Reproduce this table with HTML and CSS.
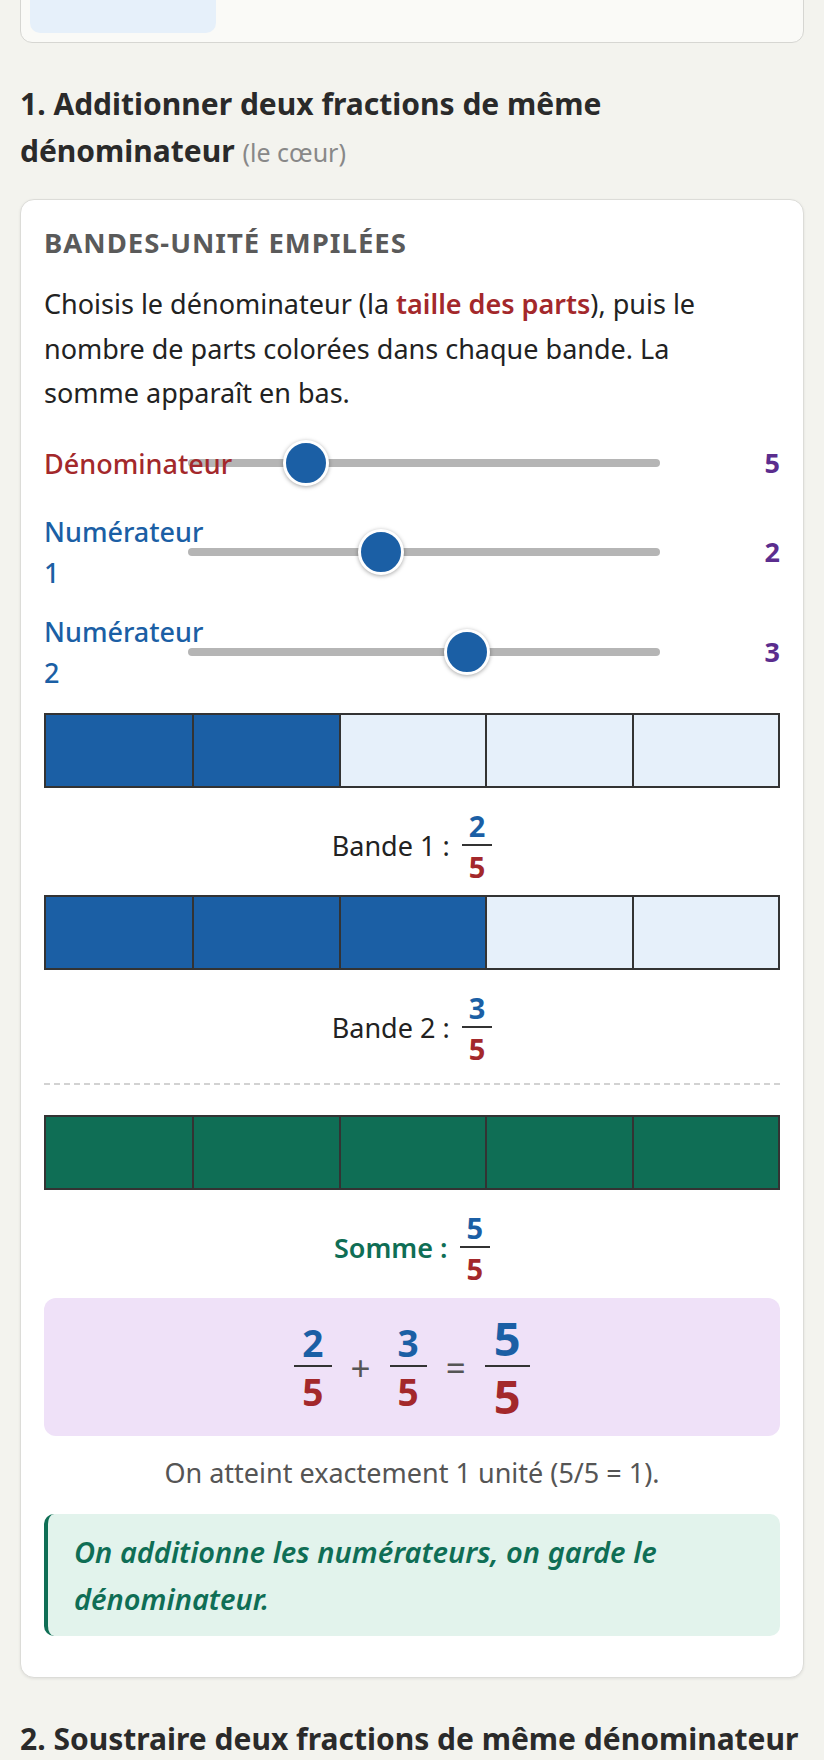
FILE: index.html
```html
<!DOCTYPE html>
<html lang="fr">
<head>
<meta charset="utf-8">
<title>Fractions de même dénominateur</title>
<link rel="stylesheet" href="styles.css">
</head>
<body>
<div class="page">
  <div class="prev-card"><div class="prev-chip"></div></div>

  <h2 class="sec-title">1. Additionner deux fractions de même dénominateur <span class="aside">(le cœur)</span></h2>

  <section class="card">
    <h3 class="card-title">Bandes-unité empilées</h3>
    <p class="intro">Choisis le dénominateur (la <strong class="hl">taille des parts</strong>), puis le nombre de parts colorées dans chaque bande. La somme apparaît en bas.</p>

    <div class="controls">
      <div class="ctrl">
        <label class="ctrl-label den-label" for="den">Dénominateur</label>
        <input class="slider" id="den" type="range" min="1" max="19" value="5">
        <span class="ctrl-val">5</span>
      </div>
      <div class="ctrl">
        <label class="ctrl-label num-label" for="n1">Numérateur 1</label>
        <input class="slider" id="n1" type="range" min="0" max="5" value="2">
        <span class="ctrl-val">2</span>
      </div>
      <div class="ctrl">
        <label class="ctrl-label num-label" for="n2">Numérateur 2</label>
        <input class="slider" id="n2" type="range" min="0" max="5" value="3">
        <span class="ctrl-val">3</span>
      </div>
    </div>

    <div class="bar">
      <span class="cell on"></span><span class="cell on"></span><span class="cell"></span><span class="cell"></span><span class="cell"></span>
    </div>
    <div class="caption">Bande 1 : <span class="frac"><span class="num">2</span><span class="den">5</span></span></div>

    <div class="bar">
      <span class="cell on"></span><span class="cell on"></span><span class="cell on"></span><span class="cell"></span><span class="cell"></span>
    </div>
    <div class="caption">Bande 2 : <span class="frac"><span class="num">3</span><span class="den">5</span></span></div>

    <div class="sum">
      <div class="bar">
        <span class="cell sum-on"></span><span class="cell sum-on"></span><span class="cell sum-on"></span><span class="cell sum-on"></span><span class="cell sum-on"></span>
      </div>
      <div class="caption sum-caption">Somme : <span class="frac"><span class="num">5</span><span class="den">5</span></span></div>
    </div>

    <div class="eq-box">
      <span class="frac frac-md"><span class="num">2</span><span class="den">5</span></span>
      <span class="op">+</span>
      <span class="frac frac-md"><span class="num">3</span><span class="den">5</span></span>
      <span class="op">=</span>
      <span class="frac frac-lg"><span class="num">5</span><span class="den">5</span></span>
    </div>

    <p class="result">On atteint exactement 1 unité (5/5 = 1).</p>

    <p class="note">On additionne les numérateurs, on garde le dénominateur.</p>
  </section>

  <h2 class="sec-title">2. Soustraire deux fractions de même dénominateur</h2>
</div>
</body>
</html>
```

FILE: styles.css
```css
html, body {
  margin: 0;
  padding: 0;
}

body {
  background: #f3f3ee;
  color: #222;
  font-family: "Noto Sans", "Open Sans", "DejaVu Sans", sans-serif;
  font-size: 27px;
  line-height: 1.6;
}

.page {
  padding: 0 20px;
}

.prev-card {
  margin-top: -40px;
  height: 83px;
  box-sizing: border-box;
  border: 1.5px solid #d6d6d2;
  border-radius: 12px;
  background: #fafaf7;
  padding: 0 9px 9px;
  display: flex;
  align-items: flex-end;
}

.prev-chip {
  width: 186px;
  height: 60px;
  background: #e6f0fa;
  border-radius: 10px;
}

.sec-title {
  margin: 37px 0 25px;
  font-size: 30px;
  line-height: 47px;
  font-weight: 700;
  color: #2a2a2a;
}

.aside {
  font-weight: 400;
  color: #888;
  font-size: 25px;
  line-height: 1;
}

.card {
  background: #fff;
  border: 1px solid #dcdcd8;
  border-radius: 14px;
  padding: 25px 23px 41px;
  box-shadow: 0 1px 3px rgba(0, 0, 0, 0.08);
}

.card-title {
  margin: 0 0 22px;
  font-size: 27.5px;
  line-height: 35px;
  font-weight: 700;
  color: #5a5a5a;
  text-transform: uppercase;
  letter-spacing: 1px;
}

.intro {
  margin: 0;
  max-width: 710px;
  line-height: 44.5px;
}

.hl {
  color: #a3282b;
  font-weight: 600;
}

.controls {
  margin: 17.5px 0 20px;
  display: flex;
  flex-direction: column;
  gap: 18px;
}

.ctrl {
  display: grid;
  grid-template-columns: 128px 1fr 104px;
  column-gap: 16px;
  align-items: center;
  min-height: 60px;
}

.ctrl-label {
  position: relative;
  z-index: 1;
  line-height: 41px;
  font-weight: 500;
}

.den-label {
  color: #a3282b;
}

.num-label {
  color: #1b5fa5;
}

.slider {
  -webkit-appearance: none;
  appearance: none;
  display: block;
  width: 100%;
  height: 8px;
  margin: 0;
  background: #b5b5b5;
  border-radius: 4px;
  outline: none;
}

.slider::-webkit-slider-thumb {
  -webkit-appearance: none;
  appearance: none;
  width: 46px;
  height: 46px;
  box-sizing: border-box;
  border-radius: 50%;
  background: #1b5fa5;
  border: 3px solid #fff;
  box-shadow: 0 1px 4px rgba(0, 0, 0, 0.35);
}

.ctrl-val {
  text-align: right;
  font-weight: 700;
  font-size: 27px;
  color: #5b2d8e;
}

.bar {
  display: grid;
  grid-template-columns: repeat(5, 1fr);
  height: 75px;
  box-sizing: border-box;
  border: 2px solid #333;
}

.cell {
  background: #e6f0fa;
}

.cell + .cell {
  border-left: 2px solid #333;
}

.cell.on {
  background: #1b5fa5;
}

.cell.sum-on {
  background: #0f6e55;
}

.caption {
  display: flex;
  justify-content: center;
  align-items: center;
  gap: 12px;
  margin: 21px 0 12px;
}

.sum-caption {
  color: #0f6e55;
  font-weight: 600;
}

.frac {
  display: inline-flex;
  flex-direction: column;
  align-items: stretch;
  font-weight: 700;
  font-size: 29px;
  line-height: 33px;
  text-align: center;
}

.frac .num {
  color: #1b5fa5;
  padding: 0 7px 2px;
  border-bottom: 2px solid #333;
}

.frac .den {
  color: #a3282b;
  padding: 4px 7px 0;
}

.sum {
  margin-top: 18px;
  padding-top: 30px;
  border-top: 2px dashed #d2d2d2;
}

.eq-box {
  margin-top: 13px;
  padding: 15px 0;
  background: #efe1f8;
  border-radius: 12px;
  display: flex;
  justify-content: center;
  align-items: center;
  gap: 19px;
}

.frac-md {
  font-size: 37px;
  line-height: 41px;
}

.frac-md .num,
.frac-md .den {
  padding-left: 8px;
  padding-right: 8px;
}

.frac-lg {
  font-size: 47px;
  line-height: 50px;
}

.frac-lg .num,
.frac-lg .den {
  padding-left: 9px;
  padding-right: 9px;
}

.op {
  color: #555;
  font-size: 35px;
  line-height: 1;
}

.result {
  margin: 16px 0 0;
  text-align: center;
  color: #555;
  line-height: 42px;
}

.note {
  margin: 20px 0 0;
  padding: 14px 24px 14px 26px;
  background: #e2f3ec;
  border-left: 4px solid #0f6e55;
  border-radius: 10px;
  color: #0f6e55;
  font-size: 29px;
  font-style: italic;
  font-weight: 600;
  line-height: 47px;
}
```
